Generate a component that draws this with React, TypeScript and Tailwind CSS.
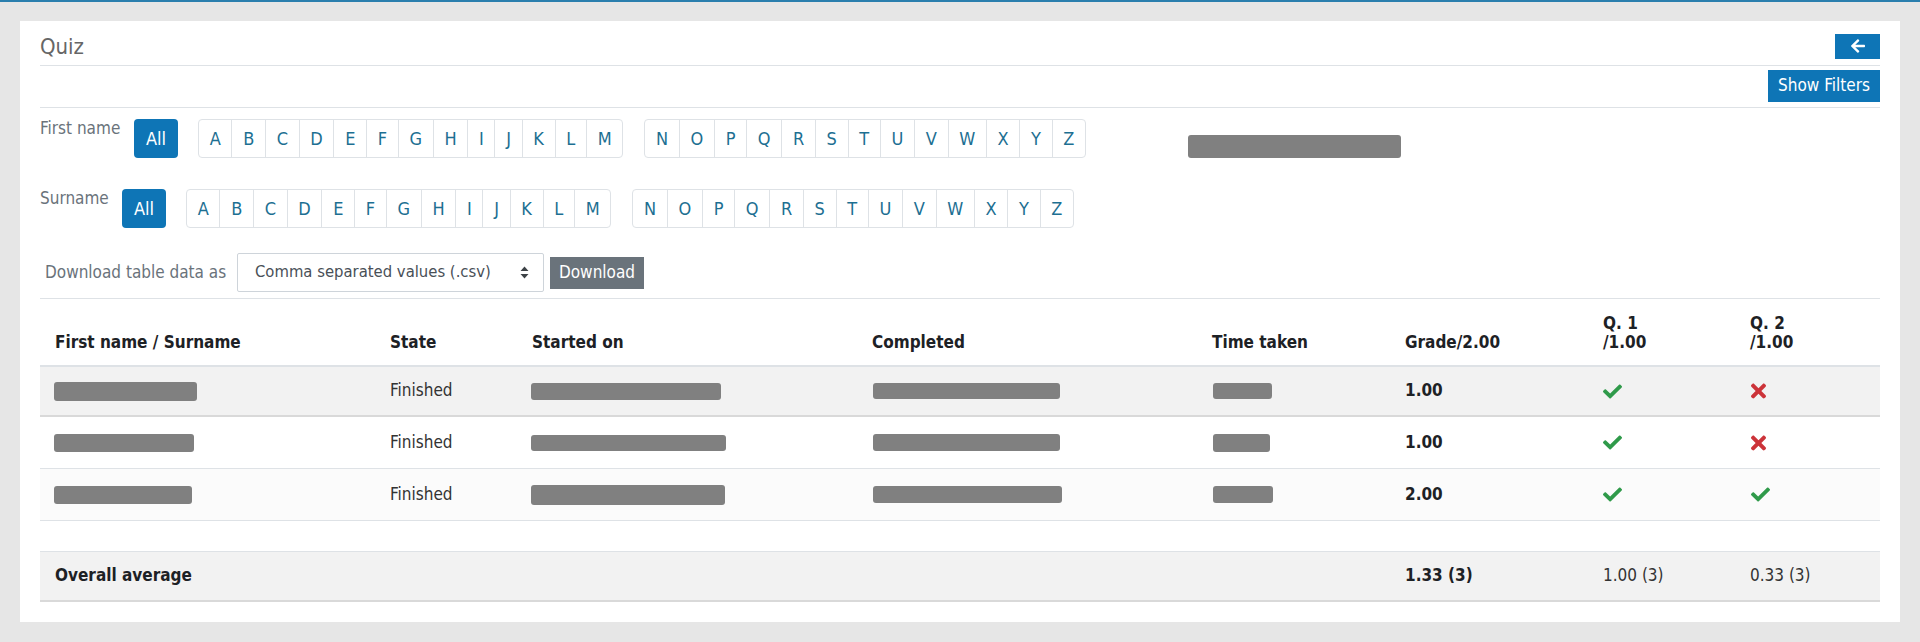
import { FaArrowLeft, FaCheck, FaTimes } from 'react-icons/fa';

const FIRST = ['A', 'B', 'C', 'D', 'E', 'F', 'G', 'H', 'I', 'J', 'K', 'L', 'M'];
const SECOND = ['N', 'O', 'P', 'Q', 'R', 'S', 'T', 'U', 'V', 'W', 'X', 'Y', 'Z'];

const GRID = 'grid grid-cols-[335px_142px_340px_340px_193px_198px_147px_145px]';

interface Attempt {
  rowClass: string;
  name: [number, number];
  started: [number, number];
  completed: [number, number];
  time: [number, number];
  grade: string;
  q1: boolean;
  q2: boolean;
}

const attempts: Attempt[] = [
  {
    rowClass: 'h-[50px] bg-[#f2f2f2] border-b-2 border-[#d9d9d9]',
    name: [143, 19],
    started: [190, 17],
    completed: [187, 16],
    time: [59, 16],
    grade: '1.00',
    q1: true,
    q2: false,
  },
  {
    rowClass: 'h-[52px] bg-white border-b border-[#dee2e6]',
    name: [140, 18],
    started: [195, 16],
    completed: [187, 17],
    time: [57, 18],
    grade: '1.00',
    q1: true,
    q2: false,
  },
  {
    rowClass: 'h-[52px] bg-[#fbfbfb] border-b border-[#dee2e6]',
    name: [138, 18],
    started: [194, 20],
    completed: [189, 17],
    time: [60, 17],
    grade: '2.00',
    q1: true,
    q2: true,
  },
];

function Redacted({ size }: { size: [number, number] }) {
  return (
    <span
      className="inline-block rounded-[3px] bg-[#808080] align-middle"
      style={{ width: size[0], height: size[1] }}
    />
  );
}

function Mark({ right }: { right: boolean }) {
  return right ? (
    <FaCheck className="h-[19px] w-[19px] text-[#2f9a4a]" />
  ) : (
    <FaTimes className="h-[22px] w-[15px] text-[#cc3339]" />
  );
}

function LetterGroup({ letters }: { letters: string[] }) {
  return (
    <div className="flex h-[39px] rounded-[4px] border border-[#dee2e6]">
      {letters.map((l, i) => (
        <span
          key={l}
          className={`flex items-center px-[10.7px] text-[18px] text-[#1d6f92] ${
            i > 0 ? 'border-l border-[#dee2e6]' : ''
          }`}
        >
          {l}
        </span>
      ))}
    </div>
  );
}

function InitialsRow({ label, labelWidth, extra }: { label: string; labelWidth: string; extra?: boolean }) {
  return (
    <div className="flex items-start">
      <span className={`${labelWidth} leading-[18px] text-[#6a737b]`}>{label}</span>
      <span className="flex h-[39px] w-[44px] items-center justify-center rounded-[4px] bg-[#0e75b6] text-[18px] text-white">
        All
      </span>
      <div className="ml-[20px]">
        <LetterGroup letters={FIRST} />
      </div>
      <div className="ml-[21px]">
        <LetterGroup letters={SECOND} />
      </div>
      {extra && <span className="ml-[102px] mt-[16px] h-[23px] w-[213px] rounded-[3px] bg-[#808080]" />}
    </div>
  );
}

export default function App() {
  return (
    <div className="min-h-[642px] border-t-2 border-[#2b7fae] bg-[#e6e6e6] px-[20px] pb-[20px] pt-[19px] font-['DejaVu_Sans','Liberation_Sans',sans-serif] text-[17px] text-[#1d2125] font-stretch-condensed">
      <div className="bg-white px-[20px] pb-[20px]">
        {/* Title */}
        <div className="flex h-[45px] items-center justify-between border-b border-[#dee2e6] pt-[6px]">
          <h2 className="text-[22px] text-[#666]">Quiz</h2>
          <button className="flex h-[25px] w-[45px] items-center justify-center bg-[#0e75b6] text-white">
            <FaArrowLeft className="h-[16px] w-[18px]" />
          </button>
        </div>
        <div className="flex h-[42px] items-start justify-end border-b border-[#dee2e6] pt-[4px]">
          <button className="h-[32px] w-[112px] bg-[#0e75b6] text-[17px] text-white">Show Filters</button>
        </div>

        {/* Initials filters */}
        <div className="border-b border-[#dee2e6] pb-[6px] pt-[11px]">
          <InitialsRow label="First name" labelWidth="w-[94px]" extra />
          <div className="mt-[31px]">
            <InitialsRow label="Surname" labelWidth="w-[82px]" />
          </div>
          <div className="mt-[25px] flex items-center">
            <span className="w-[197px] pl-[5px] text-[#6a737b]">Download table data as</span>
            <div className="flex h-[39px] w-[307px] items-center justify-between rounded-[2px] border border-[#ced4da] pl-[17px] pr-[14px] text-[16.5px] text-[#495057]">
              <span>Comma separated values (.csv)</span>
              <svg width="9" height="13" viewBox="0 0 9 13">
                <path d="M4.5 0.5 L8.5 5 L0.5 5 Z M4.5 12.5 L8.5 8 L0.5 8 Z" fill="#3d4247" />
              </svg>
            </div>
            <button className="ml-[6px] h-[32px] w-[94px] bg-[#6a737b] text-[17px] text-white">Download</button>
          </div>
        </div>

        {/* Attempts table */}
        <div className={`${GRID} h-[68px] items-end border-b-2 border-[#dee2e6] font-bold leading-[19px]`}>
          <div className="pb-[13px] pl-[15px]">First name / Surname</div>
          <div className="pb-[13px] pl-[15px]">State</div>
          <div className="pb-[13px] pl-[15px]">Started on</div>
          <div className="pb-[13px] pl-[15px]">Completed</div>
          <div className="pb-[13px] pl-[15px]">Time taken</div>
          <div className="pb-[13px] pl-[15px]">Grade/2.00</div>
          <div className="pb-[13px] pl-[15px]">
            Q. 1
            <br />
            /1.00
          </div>
          <div className="pb-[13px] pl-[15px]">
            Q. 2
            <br />
            /1.00
          </div>
        </div>

        {attempts.map((a, i) => (
          <div key={i} className={`${GRID} items-center ${a.rowClass}`}>
            <div className="pl-[14px]">
              <Redacted size={a.name} />
            </div>
            <div className="pl-[15px] text-[#333]">Finished</div>
            <div className="pl-[14px]">
              <Redacted size={a.started} />
            </div>
            <div className="pl-[16px]">
              <Redacted size={a.completed} />
            </div>
            <div className="pl-[16px]">
              <Redacted size={a.time} />
            </div>
            <div className="pl-[15px] font-bold">{a.grade}</div>
            <div className="pl-[15px]">
              <Mark right={a.q1} />
            </div>
            <div className="pl-[16px]">
              <Mark right={a.q2} />
            </div>
          </div>
        ))}

        <div className="h-[31px] border-b border-[#dee2e6]" />

        <div className={`${GRID} h-[50px] items-center border-b-2 border-[#d9d9d9] bg-[#f2f2f2]`}>
          <div className="pl-[15px] font-bold">Overall average</div>
          <div />
          <div />
          <div />
          <div />
          <div className="pl-[15px] font-bold">1.33 (3)</div>
          <div className="pl-[15px] text-[#333]">1.00 (3)</div>
          <div className="pl-[15px] text-[#333]">0.33 (3)</div>
        </div>
      </div>
    </div>
  );
}
